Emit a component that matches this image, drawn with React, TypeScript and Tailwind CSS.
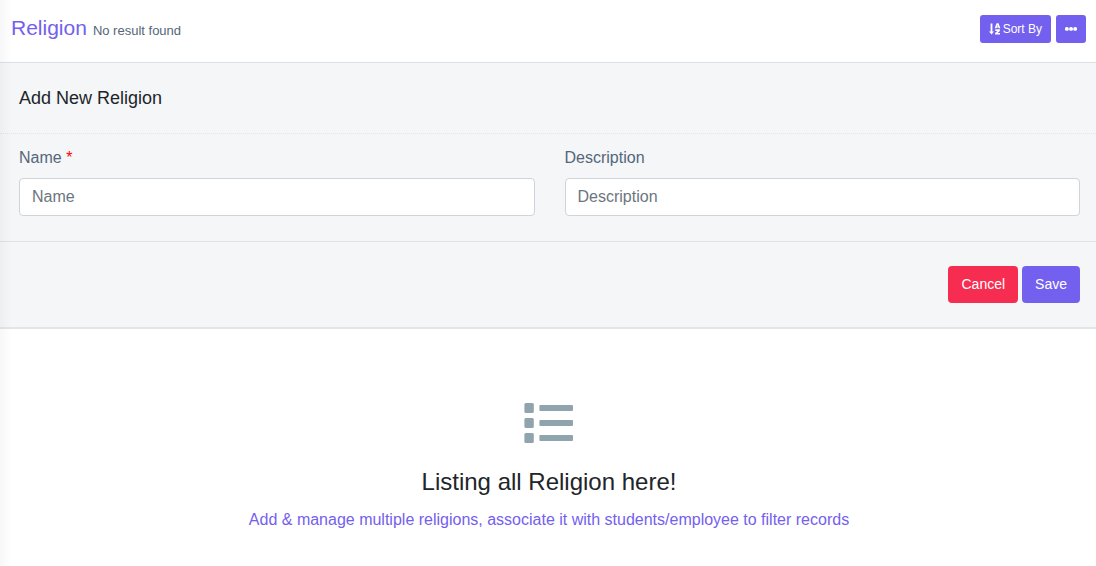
import { useState } from "react";
import type { ReactNode } from "react";

type FieldProps = {
  id: string;
  label: string;
  required?: boolean;
  value: string;
  onChange: (value: string) => void;
};

function Field({ id, label, required, value, onChange }: FieldProps) {
  return (
    <div className="flex flex-1 flex-col gap-2">
      <label htmlFor={id} className="text-[#54667a]">
        {label} {required && <span className="text-[#ff0000]">*</span>}
      </label>
      <input
        id={id}
        type="text"
        placeholder={label}
        required={required}
        value={value}
        onChange={(e) => onChange(e.target.value)}
        className="h-[38px] w-full rounded border border-[#ced4da] bg-white px-3 text-[#495057] placeholder:text-[#6c757d] focus:border-[#7460ee] focus:outline-none"
      />
    </div>
  );
}

function SmallButton({ label, children }: { label?: string; children: ReactNode }) {
  return (
    <button
      type="button"
      aria-label={label}
      className="flex h-7 cursor-pointer items-center gap-[2px] rounded-[3px] bg-[#7460ee] px-[9px] text-xs text-white hover:bg-[#563dea]"
    >
      {children}
    </button>
  );
}

function SortIcon() {
  return (
    <svg viewBox="0 0 12 12" className="size-3" fill="currentColor" aria-hidden="true">
      <path d="M1.6 0.5h1.8v8h1.6L2.5 11.5 0 8.5h1.6z" />
      <path
        fillRule="evenodd"
        d="M7.6 0.3h1.9L11.4 5.3H9.7L9.4 4.5H7.7L7.4 5.3H5.7zM8.1 3.4h0.9L8.55 2z"
      />
      <path d="M6.3 6.3h4.6v1.6L8.6 9.9h2.4v1.6H6.1V10l2.3-2.1H6.3z" />
    </svg>
  );
}

function DotsIcon() {
  return (
    <svg viewBox="0 0 12 12" className="size-3" fill="currentColor" aria-hidden="true">
      <rect x="0" y="4" width="3.7" height="3.8" rx="1.5" />
      <rect x="4.2" y="4" width="3.7" height="3.8" rx="1.5" />
      <rect x="8.3" y="4" width="3.7" height="3.8" rx="1.5" />
    </svg>
  );
}

function ListIcon() {
  return (
    <svg viewBox="0 0 50 50" className="size-[50px]" fill="#90a4ae" aria-hidden="true">
      {[5, 20, 35].map((y) => (
        <g key={y}>
          <rect x="0.4" y={y} width="9.4" height="10" rx="1.5" />
          <rect x="15.4" y={y + 2} width="33.6" height="6" rx="1" />
        </g>
      ))}
    </svg>
  );
}

function App() {
  const [name, setName] = useState("");
  const [description, setDescription] = useState("");

  const handleCancel = () => {
    setName("");
    setDescription("");
  };

  return (
    <div className="relative min-h-screen bg-white font-['Liberation_Sans',Arial,sans-serif] text-base text-[#212529]">
      {/* page title and actions */}
      <header className="flex items-start justify-between border-b border-[#d9e0e6] pt-[14px] pr-[10px] pb-[19px] pl-[11px]">
        <div className="flex items-baseline gap-[6px]">
          <h1 className="text-[21px] leading-7 text-[#7460ee]">Religion</h1>
          <span className="text-[13px] leading-5 text-[#54667a]">No result found</span>
        </div>
        <div className="flex gap-[5px] pt-px">
          <SmallButton>
            <SortIcon />
            Sort By
          </SmallButton>
          <SmallButton label="More options">
            <DotsIcon />
          </SmallButton>
        </div>
      </header>

      {/* add form */}
      <form
        className="border-b-2 border-[#e3e5e7] bg-[#f4f6f8]"
        onSubmit={(e) => e.preventDefault()}
      >
        <h2 className="border-b border-dotted border-[#e3e6e9] px-[19px] py-[21px] text-lg">
          Add New Religion
        </h2>
        <div className="flex gap-[30px] border-b border-[#e1e4e7] pt-3 pr-4 pb-[25px] pl-[19px]">
          <Field id="name" label="Name" required value={name} onChange={setName} />
          <Field
            id="description"
            label="Description"
            value={description}
            onChange={setDescription}
          />
        </div>
        <div className="flex justify-end gap-1 py-6 pr-4 text-sm text-white">
          <button
            type="button"
            onClick={handleCancel}
            className="h-[37px] cursor-pointer rounded bg-[#f62d51] px-[13px] pb-[2px] hover:bg-[#f30a34]"
          >
            Cancel
          </button>
          <button
            type="submit"
            className="h-[37px] cursor-pointer rounded bg-[#7460ee] px-[13px] pb-[2px] hover:bg-[#563dea]"
          >
            Save
          </button>
        </div>
      </form>

      {/* empty list */}
      <section className="flex flex-col items-center px-4 pt-[69px] pb-9 pl-[18px] text-center">
        <ListIcon />
        <h3 className="mt-[18px] text-2xl">Listing all Religion here!</h3>
        <p className="mt-[10px] text-[#7460ee]">
          Add &amp; manage multiple religions, associate it with students/employee to filter records
        </p>
      </section>

      <div className="pointer-events-none absolute inset-y-0 left-0 w-3 bg-linear-to-r from-black/3 to-transparent" />
    </div>
  );
}

export default App;
